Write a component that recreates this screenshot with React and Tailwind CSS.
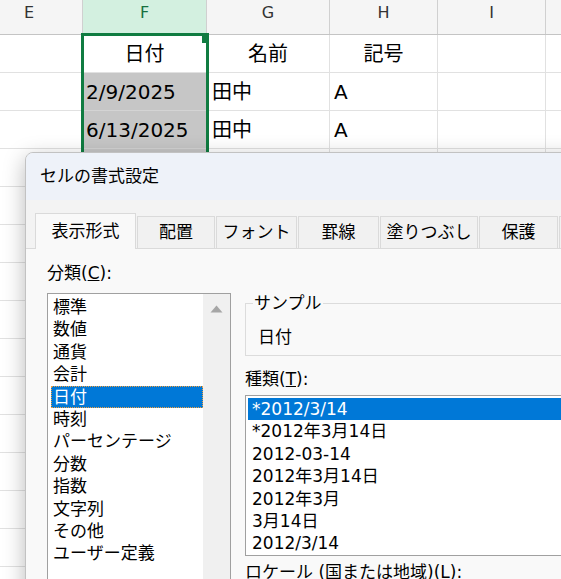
import clsx from 'clsx';

/**
 * Sheet data
 */
const COLS = ['E', 'F', 'G', 'H', 'I', 'J'];

const ROWS = [
  { f: '日付', g: '名前', h: '記号', head: true },
  { f: '2/9/2025', g: '田中', h: 'A' },
  { f: '6/13/2025', g: '田中', h: 'A' },
  {},
  {},
  {},
  {},
  {},
  {},
  {},
  {},
  {},
  {},
  {},
];

const CATEGORIES = [
  '標準',
  '数値',
  '通貨',
  '会計',
  '日付',
  '時刻',
  'パーセンテージ',
  '分数',
  '指数',
  '文字列',
  'その他',
  'ユーザー定義',
];

const TYPES = ['*2012/3/14', '*2012年3月14日', '2012-03-14', '2012年3月14日', '2012年3月', '3月14日', '2012/3/14'];

const TABS = [
  { label: '表示形式', w: 'w-[101px]', active: true },
  { label: '配置', w: 'w-[78px]' },
  { label: 'フォント', w: 'w-[81px]' },
  { label: '罫線', w: 'w-[81px]' },
  { label: '塗りつぶし', w: 'w-[98px]' },
  { label: '保護', w: 'w-[79px]' },
  { label: '', w: 'w-[60px]' },
];

/**
 * Spreadsheet behind the dialog (scrolled: column E starts off-screen)
 */
const Sheet = () => (
  <div className="relative -ml-[24px]">
    <div className="grid grid-cols-[107px_124px_123px_108px_108px_108px] h-[35px] bg-[#f5f5f5] border-b border-[#c4c4c4]">
      {COLS.map((c) => (
        <div
          key={c}
          className={clsx(
            'flex justify-center pt-[3px] border-r border-[#d0d0d0] text-[16px] leading-[20px]',
            c === 'F' ? 'bg-[#d3f0e0] text-[#17703f]' : 'text-[#333]'
          )}
        >
          {c === 'J' ? '' : c}
        </div>
      ))}
    </div>

    {ROWS.map((r, i) => (
      <div key={i} className="grid grid-cols-[107px_124px_123px_108px_108px_108px] h-[38px] text-[20px] leading-[26px] text-black">
        <div className="border-r border-b border-[#e1e1e1]" />
        <div
          className={clsx(
            'flex items-center border-r border-b',
            i === 0 ? 'bg-white border-[#e1e1e1]' : 'bg-[#c6c6c6] border-[#d4d4d4]',
            r.head ? 'justify-center' : 'pl-[3px]'
          )}
        >
          {r.f}
        </div>
        <div className={clsx('flex items-center border-r border-b border-[#e1e1e1]', r.head ? 'justify-center' : 'pl-[5px]')}>
          {r.g}
        </div>
        <div className={clsx('flex items-center border-r border-b border-[#e1e1e1]', r.head ? 'justify-center' : 'pl-[4px]')}>
          {r.h}
        </div>
        <div className="border-r border-b border-[#e1e1e1]" />
        <div className="border-r border-b border-[#e1e1e1]" />
      </div>
    ))}

    {/* selection frame */}
    <div className="absolute left-[105px] top-[33px] w-[128px] h-[420px] border-[3px] border-[#107c41]" />
    <div className="absolute left-[226px] top-[36px] w-[7px] h-[7px] bg-[#107c41]" />
  </div>
);

const ListItem = ({ children, selected, focus }) => (
  <div
    className={clsx(
      'h-[22.4px] leading-[22px] pl-[2px] whitespace-nowrap',
      selected ? 'bg-[#0078d7] text-white' : 'text-black',
      focus && 'outline outline-1 outline-dotted outline-[#f0a040] -outline-offset-1'
    )}
  >
    {children}
  </div>
);

/**
 * Format Cells dialog
 */
const Dialog = () => (
  <div className="absolute left-[25px] top-[152px] w-[600px] h-[460px] rounded-tl-[8px] border border-[#c2c2c2] bg-[#f3f3f3] overflow-hidden shadow-[0_6px_22px_rgba(0,0,0,0.28)] text-[17px] text-black">
    <div className="h-[47px] bg-[#eef2f9] pl-[14px] flex items-center">セルの書式設定</div>

    {/* tabs */}
    <div className="flex items-end gap-[1px] pl-[9px] pt-[13px]">
      {TABS.map((t, i) => (
        <div
          key={i}
          className={clsx(
            'flex justify-center shrink-0 border-t border-x border-[#dadada] leading-[24px]',
            t.w,
            t.active ? 'h-[36px] pt-[5px] bg-[#f9f9f9] relative -mb-[1px]' : 'h-[32px] pt-[3px] bg-[#f1f1f1]'
          )}
        >
          {t.label}
        </div>
      ))}
    </div>

    {/* panel */}
    <div className="flex h-[400px] bg-[#f9f9f9] border-t border-[#dadada]">
      <div className="pl-[21px] pt-[12px] w-[219px] shrink-0">
        <div className="leading-[24px]">
          分類(<span className="underline">C</span>):
        </div>
        <div className="mt-[8px] flex w-[184px] h-[300px] border border-[#a0a0a0] bg-white">
          <div className="flex-1 pl-[3px] pt-[2px]">
            {CATEGORIES.map((c) => (
              <ListItem key={c} selected={c === '日付'} focus={c === '日付'}>
                {c}
              </ListItem>
            ))}
          </div>
          <div className="w-[27px] bg-[#f0f0f0] flex justify-center pt-[11px]">
            <svg width="13" height="8" viewBox="0 0 13 8">
              <path d="M6.5 0.5 L12.5 7.5 L0.5 7.5 Z" fill="#a6a6a6" />
            </svg>
          </div>
        </div>
      </div>

      <div className="flex-1 pt-[42px]">
        <fieldset className="border border-[#dcdcdc] pb-[6px] w-[400px]">
          <legend className="ml-[7px] px-[1px] leading-[24px]">サンプル</legend>
          <div className="pt-[10px] pl-[12px] leading-[24px]">日付</div>
        </fieldset>

        <div className="mt-[11px] leading-[24px]">
          種類(<span className="underline">T</span>):
        </div>
        <div className="mt-[4px] w-[400px] h-[161px] border border-[#a0a0a0] bg-white p-[2px]">
          {TYPES.map((t, i) => (
            <div
              key={t}
              className={clsx(
                'h-[22.4px] leading-[22px] pl-[4px] whitespace-nowrap',
                i === 0 ? 'bg-[#0078d7] text-white' : 'text-black'
              )}
            >
              {t}
            </div>
          ))}
        </div>
        <div className="mt-[4px] leading-[24px] whitespace-nowrap">
          ロケール (国または地域)(<span className="underline">L</span>):
        </div>
      </div>
    </div>
  </div>
);

export default function App() {
  return (
    <div className="relative w-[561px] h-[579px] overflow-hidden bg-white font-['DejaVu_Sans','Noto_Sans_CJK_JP',sans-serif]">
      <Sheet />
      <Dialog />
    </div>
  );
}
